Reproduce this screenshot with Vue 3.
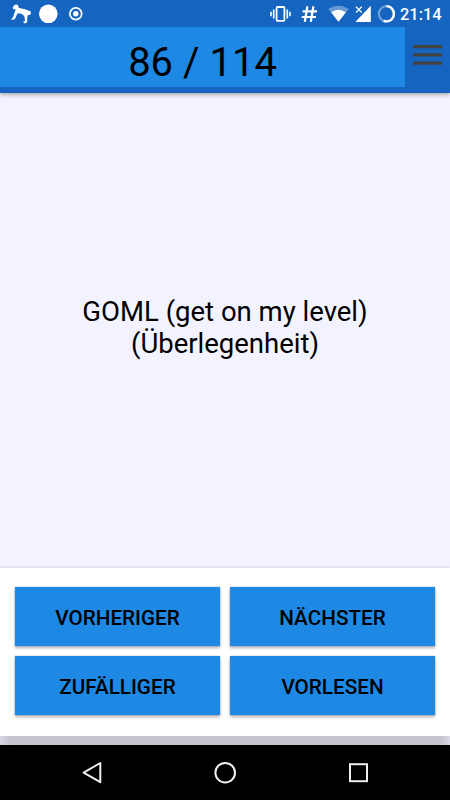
<script setup>
const actions = ['Vorheriger', 'Nächster', 'Zufälliger', 'Vorlesen']
</script>

<template>
  <div class="screen">
    <header class="top">
      <div class="status">
        <svg width="35" height="27" viewBox="0 0 35 27">
          <path d="M14.3 5.2L16 4.4L18.3 5.2L18.2 7.3L20.3 8.2L25 9.3L30.8 11.4L30.6 14.4L27.4 15.6L27.1 22.6L24 23.4L23.2 21.8L25 21L24.3 16L21.4 13.7L17.7 13.2L16.4 15.7L14.9 19L12 20.1L11.3 19L13.1 17.3L14.3 13L15.7 10L14.8 9.1L13.2 9.5L12.8 7.2Z" fill="#fff" />
        </svg>
        <svg width="29" height="27" viewBox="35 0 29 27">
          <circle cx="48.3" cy="13.8" r="9.3" fill="#fff" />
        </svg>
        <svg width="26" height="27" viewBox="64 0 26 27">
          <circle cx="75.8" cy="13.7" r="5.9" fill="none" stroke="#fff" stroke-width="1.7" />
          <circle cx="75.8" cy="13.7" r="2.7" fill="#fff" />
        </svg>
        <span class="spacer"></span>
        <svg width="31" height="27" viewBox="265 0 31 27">
          <rect x="276.6" y="7" width="7.8" height="13.8" rx="1" fill="none" stroke="#fff" stroke-width="1.8" />
          <path d="M273.7 9.5V18.5M271 11.8V16.2M287.3 9.5V18.5M290 11.8V16.2" stroke="#fff" stroke-width="1.6" />
        </svg>
        <svg width="29" height="27" viewBox="296 0 29 27">
          <path d="M307.4 6.3L304.8 21.8M313.4 6.3L310.8 21.8M302.6 11.3H317M301.7 17H316" fill="none" stroke="#fff" stroke-width="2.2" />
        </svg>
        <svg width="26" height="27" viewBox="325 0 26 27">
          <path d="M338.5 21.8L328.3 9Q338.5 2.6 348.7 9Z" fill="#fff" fill-opacity=".35" />
          <path d="M338.5 21.8L331.1 12.3Q338.5 7 345.9 12.3Z" fill="#fff" />
        </svg>
        <svg width="24" height="27" viewBox="351 0 24 27">
          <path d="M370.8 5.8V22H355.3Z" fill="#fff" />
          <path d="M355 5L362.8 12.8H355Z" fill="#1565c0" />
          <path d="M356 6.8L361.8 12.6M361.8 6.8L356 12.6" stroke="#fff" stroke-width="1.3" />
        </svg>
        <svg width="25" height="27" viewBox="375 0 25 27">
          <circle cx="386.4" cy="13.8" r="7.6" fill="none" stroke="#fff" stroke-opacity=".38" stroke-width="2.2" />
          <path d="M386.4 6.2A7.6 7.6 0 1 1 383.6 20.9" fill="none" stroke="#fff" stroke-width="2.3" />
        </svg>
        <span class="clock">21:14</span>
      </div>
      <div class="bar">
        <div class="counter">86 / 114</div>
        <svg class="menu" width="45" height="60" viewBox="0 0 45 60">
          <path d="M8 19.6H37M8 27.8H37M8 36.2H37" stroke="#424242" stroke-width="3.2" />
        </svg>
      </div>
    </header>
    <main class="card">
      <p>GOML (get on my level)<br />(Überlegenheit)</p>
    </main>
    <section class="controls">
      <button v-for="a in actions" :key="a">{{ a }}</button>
    </section>
    <div class="under"></div>
    <nav class="nav">
      <svg width="450" height="55" viewBox="0 0 450 55" fill="none" stroke="#eee" stroke-width="2">
        <path d="M100.3 18V37.2L83.6 27.6Z" stroke-linejoin="round" />
        <circle cx="225.2" cy="27.7" r="9.8" />
        <rect x="350" y="19.2" width="17" height="17" />
      </svg>
    </nav>
  </div>
</template>

<style>
body {
  margin: 0;
}
</style>

<style scoped>
.screen {
  width: 450px;
  height: 800px;
  display: flex;
  flex-direction: column;
  overflow: hidden;
  background: #f3f3ff;
  font-family: Roboto, sans-serif;
  color: #000;
}
.top {
  height: 93px;
  background: #1565c0;
  box-shadow: 0 1px 5px rgba(0, 0, 0, 0.4);
  flex: none;
}
.status {
  height: 27px;
  display: flex;
}
.status svg {
  flex: none;
}
.spacer {
  flex: 1;
}
.clock {
  width: 50px;
  color: #fff;
  font-size: 16.4px;
  font-weight: 500;
  line-height: 30px;
  white-space: nowrap;
}
.bar {
  display: flex;
  height: 60px;
}
.counter {
  width: 405px;
  background: #1e88e5;
  font-size: 40px;
  line-height: 71px;
  height: 60px;
  text-align: center;
}
.menu {
  flex: none;
}
.card {
  height: 475px;
  display: flex;
  align-items: center;
  justify-content: center;
  flex: none;
}
.card p {
  margin: 0;
  padding-bottom: 5px;
  text-align: center;
  font-size: 27.5px;
  line-height: 32px;
}
.controls {
  height: 168px;
  box-sizing: border-box;
  padding: 19px 15px 21px;
  display: grid;
  grid-template-columns: 1fr 1fr;
  grid-template-rows: 59px 59px;
  gap: 10px;
  background: #fff;
  box-shadow: 0 0 3px rgba(0, 0, 0, 0.22);
  flex: none;
}
button {
  border: 0;
  padding: 2px 0 0;
  background: #1e88e5;
  box-shadow: 0 2px 3px rgba(0, 0, 0, 0.3), 0 0 1px rgba(20, 60, 180, 0.5);
  color: #000;
  font: 500 20.7px Roboto, sans-serif;
  text-transform: uppercase;
}
.under {
  height: 9px;
  background: linear-gradient(90deg, #d9d9e6, #c6c6d1 9px, #c6c6d1 441px, #d9d9e6);
  flex: none;
}
.nav {
  height: 55px;
  background: #000;
  flex: none;
}
.nav svg {
  display: block;
}
</style>
